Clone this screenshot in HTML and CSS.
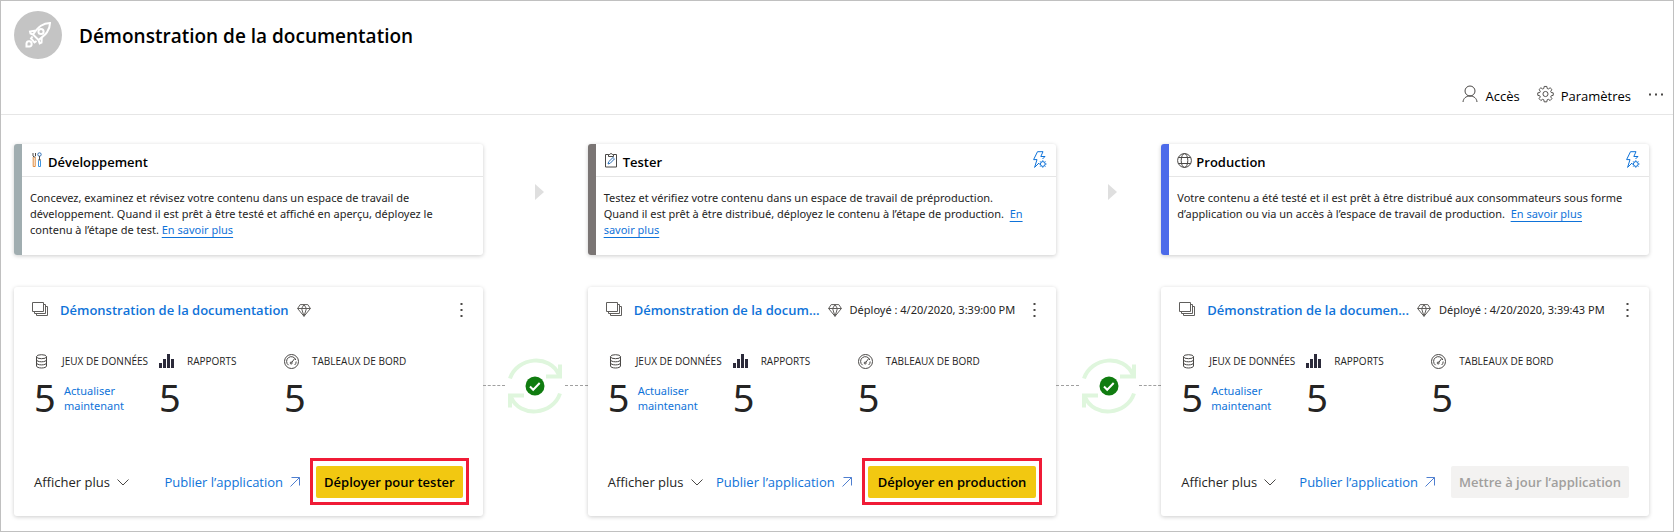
FILE: index.html
```html
<!DOCTYPE html>
<html lang="fr">
<head>
<meta charset="utf-8">
<title>Démonstration de la documentation</title>
<link rel="stylesheet" href="styles.css">
</head>
<body>
<svg class="sprite" aria-hidden="true">
  <symbol id="i-bolt" viewBox="0 0 16 18"><path d="M5.500.7H11L8.800 5.500H13L10.500 8M5.500.7 1.600 8.600H5L2.600 16.400 7 12" /><circle cx="10.800" cy="13" r="2.400"/><path d="M10.800 9.300v1.300M10.800 15.400v1.300M7.100 13h1.300M13.200 13h1.300M8.200 10.400l.9.9M12.500 14.700l.9.9M13.400 10.400l-.9.9M9.100 14.700l-.9.9"/></symbol>
  <symbol id="i-layers" viewBox="0 0 16 15"><path d="M.5.500h11v9H.500zM11.500 2.500h2v9h-11v-2M13.500 4.500h2v9h-11v-2"/></symbol>
  <symbol id="i-gem" viewBox="0 0 14 13"><path d="M3.200.6h7.600L13.400 4.500 7 12.300.6 4.500zM.6 4.500h12.800M4.600 4.500 7 12.300l2.400-7.800L7 .6z"/></symbol>
  <symbol id="i-dots" viewBox="0 0 3 16"><path d="M.5 1h2v2h-2zM.5 7h2v2h-2zM.5 13h2v2h-2z"/></symbol>
  <symbol id="i-data" viewBox="0 0 13 15"><ellipse cx="6.500" cy="2.700" rx="5" ry="2"/><path d="M1.500 2.700v9.300c0 1.100 2.200 2 5 2s5-.9 5-2V2.700M1.500 5.800c0 1.100 2.200 2 5 2s5-.9 5-2M1.500 8.900c0 1.100 2.200 2 5 2s5-.9 5-2"/></symbol>
  <symbol id="i-bars" viewBox="0 0 15 14"><path d="M0 9h3v5H0zM4 5h3v9H4zM8 0h3v14H8zM12 5h3v9h-3z"/></symbol>
  <symbol id="i-gauge" viewBox="0 0 15 15"><circle cx="7.500" cy="7.500" r="7"/><path d="M4.600 11.200A4.700 4.700 0 1 1 11.800 6M12.200 7.500a4.700 4.700 0 0 1-1.500 3.500M7.800 8.400 10.600 4.600"/><circle cx="7.200" cy="9" r="1"/></symbol>
  <symbol id="i-chevron" viewBox="0 0 12 7"><path d="M.5.5 6 6 11.500.5"/></symbol>
  <symbol id="i-out" viewBox="0 0 10 10"><path d="M1.500.500h8v8M9.500.500l-9 9"/></symbol>
  <symbol id="i-sync" viewBox="0 0 56 56"><path class="ring" d="M3 20.500C10-1 43-4.500 52 17M53 35.500C46 57 13 60.500 4 39"/><path class="ring" d="M53 6.500v12H39M3 49.500v-12h14"/><circle class="ok" cx="28" cy="28" r="9.500"/><path class="tick" d="m23 28.500 3.200 3.200 6.500-6.700"/></symbol>
</svg>

<div class="page">
  <header class="top">
    <div class="brand">
      <span class="avatar">
        <svg width="26" height="26" viewBox="0 0 26 26"><path d="M25 1C18 1 13.500 4.500 8 12.500l5.500 5.500C21 12.500 25 8 25 1zM8 12.500l-2.500-1L5 9.500 11 8.500M13.500 18l1.200 3.500 1.800-.8.300-5.200M7.500 14.500 6 16.500l3.500 4 2-1.500"/><circle cx="16" cy="9.500" r="2.600"/><path d="M1.500 24.500v-3a2.600 2.600 0 1 1 2.800 3z"/></svg>
      </span>
      <h1>Démonstration de la documentation</h1>
    </div>
    <div class="toolbar">
      <button type="button" class="tool"><svg width="16" height="18" viewBox="0 0 16 18"><circle cx="8" cy="6" r="5"/><path d="M1 17c.3-3.600 3-6 7-6s6.700 2.400 7 6"/></svg><span>Accès</span></button>
      <button type="button" class="tool"><svg width="17" height="18" viewBox="0 0 18 18"><circle cx="9" cy="9" r="2.700"/><path d="M7.600 1h2.800l.4 2.200 1.200.5 1.900-1.300 1.900 1.900-1.300 1.900.5 1.200 2.200.4v2.600l-2.200.5-.5 1.200 1.300 1.800-1.900 2-1.900-1.300-1.200.5-.4 2.200H7.600l-.4-2.200-1.200-.5-1.900 1.300-1.900-2 1.300-1.800-.5-1.200L.8 10.400V7.800L3 7.400l.5-1.200-1.300-1.900 1.900-1.900L6 3.700l1.200-.5z"/></svg><span>Paramètres</span></button>
      <button type="button" class="more" aria-label="Plus"><svg width="16" height="3" viewBox="0 0 16 3"><path d="M1 .5h2v2H1zM7 .5h2v2H7zM13 .5h2v2h-2z"/></svg></button>
    </div>
  </header>

  <main class="pipeline">
    <section class="stage dev">
      <div class="stage-head"><svg class="tools" width="10" height="16" viewBox="0 0 10 16"><path stroke="#e08a3c" d="M1.200 5v9.500h2V5"/><path d="M1 1v3l1.200 1.200L3.500 4V1"/><circle stroke="#2f6fb5" cx="7.500" cy="2.500" r="1.700"/><path d="M7.500 4v4M6 8h3"/><path stroke="#3e95e0" d="M6.500 8.500v6h2v-6"/></svg><h2>Développement</h2></div>
      <p>Concevez, examinez et révisez votre contenu dans un espace de travail de développement. Quand il est prêt à être testé et affiché en aperçu, déployez le contenu à l’étape de test. <a href="#">En savoir plus</a></p>
    </section>
    <div class="next"><svg width="9" height="16" viewBox="0 0 9 16"><path d="M0 0v16l9-8z"/></svg></div>
    <section class="stage test">
      <div class="stage-head"><svg class="clip" width="12" height="16" viewBox="0 0 12 16"><path d="M3.500 2.500h-3v12.500h11V2.500h-3M3.500 4.500v-2h1.300a1.300 1.300 0 0 1 2.500 0h1.200v2z"/><path stroke="#2f6fb5" d="m3 12 .7-2.300L8 5.500l1.500 1.400-4.200 4.300z"/></svg><h2>Tester</h2><button type="button" class="rules" aria-label="Règles"><svg width="16" height="18"><use href="#i-bolt"/></svg></button></div>
      <p>Testez et vérifiez votre contenu dans un espace de travail de préproduction. Quand il est prêt à être distribué, déployez le contenu à l’étape de production. &nbsp;<a href="#">En savoir plus</a></p>
    </section>
    <div class="next"><svg width="9" height="16" viewBox="0 0 9 16"><path d="M0 0v16l9-8z"/></svg></div>
    <section class="stage prod">
      <div class="stage-head"><svg width="15" height="15" viewBox="0 0 15 15"><circle cx="7.500" cy="7.500" r="6.900"/><ellipse cx="7.500" cy="7.500" rx="3.300" ry="6.900"/><path d="M1.300 4.500h12.400M1.300 10.500h12.400"/></svg><h2>Production</h2><button type="button" class="rules" aria-label="Règles"><svg width="16" height="18"><use href="#i-bolt"/></svg></button></div>
      <p>Votre contenu a été testé et il est prêt à être distribué aux consommateurs sous forme d’application ou via un accès à l’espace de travail de production. &nbsp;<a href="#">En savoir plus</a></p>
    </section>

    <article class="space">
      <div class="space-head">
        <svg class="layers" width="16" height="15"><use href="#i-layers"/></svg>
        <a class="name" href="#">Démonstration de la documentation</a>
        <svg class="gem" width="14" height="13"><use href="#i-gem"/></svg>
        <button type="button" class="menu" aria-label="Menu"><svg width="3" height="16"><use href="#i-dots"/></svg></button>
      </div>
      <div class="stats">
        <div class="stat"><svg width="15" height="15"><use href="#i-data"/></svg><span class="label">JEUX DE DONNÉES</span><strong>5</strong><a href="#">Actualiser maintenant</a></div>
        <div class="stat"><svg class="solid" width="15" height="14"><use href="#i-bars"/></svg><span class="label">RAPPORTS</span><strong>5</strong></div>
        <div class="stat"><svg width="15" height="15"><use href="#i-gauge"/></svg><span class="label">TABLEAUX DE BORD</span><strong>5</strong></div>
      </div>
      <div class="actions">
        <button type="button" class="show">Afficher plus<svg width="12" height="7"><use href="#i-chevron"/></svg></button>
        <a class="publish" href="#">Publier l’application<svg width="10" height="10"><use href="#i-out"/></svg></a>
        <button type="button" class="deploy marked">Déployer pour tester</button>
      </div>
    </article>
    <div class="sync"><svg width="56" height="56"><use href="#i-sync"/></svg></div>
    <article class="space">
      <div class="space-head">
        <svg class="layers" width="16" height="15"><use href="#i-layers"/></svg>
        <a class="name" href="#">Démonstration de la docum...</a>
        <svg class="gem" width="14" height="13"><use href="#i-gem"/></svg>
        <span class="date">Déployé : 4/20/2020, 3:39:00 PM</span>
        <button type="button" class="menu" aria-label="Menu"><svg width="3" height="16"><use href="#i-dots"/></svg></button>
      </div>
      <div class="stats">
        <div class="stat"><svg width="15" height="15"><use href="#i-data"/></svg><span class="label">JEUX DE DONNÉES</span><strong>5</strong><a href="#">Actualiser maintenant</a></div>
        <div class="stat"><svg class="solid" width="15" height="14"><use href="#i-bars"/></svg><span class="label">RAPPORTS</span><strong>5</strong></div>
        <div class="stat"><svg width="15" height="15"><use href="#i-gauge"/></svg><span class="label">TABLEAUX DE BORD</span><strong>5</strong></div>
      </div>
      <div class="actions">
        <button type="button" class="show">Afficher plus<svg width="12" height="7"><use href="#i-chevron"/></svg></button>
        <a class="publish" href="#">Publier l’application<svg width="10" height="10"><use href="#i-out"/></svg></a>
        <button type="button" class="deploy wide marked">Déployer en production</button>
      </div>
    </article>
    <div class="sync"><svg width="56" height="56"><use href="#i-sync"/></svg></div>
    <article class="space">
      <div class="space-head">
        <svg class="layers" width="16" height="15"><use href="#i-layers"/></svg>
        <a class="name" href="#">Démonstration de la documen...</a>
        <svg class="gem" width="14" height="13"><use href="#i-gem"/></svg>
        <span class="date">Déployé : 4/20/2020, 3:39:43 PM</span>
        <button type="button" class="menu" aria-label="Menu"><svg width="3" height="16"><use href="#i-dots"/></svg></button>
      </div>
      <div class="stats">
        <div class="stat"><svg width="15" height="15"><use href="#i-data"/></svg><span class="label">JEUX DE DONNÉES</span><strong>5</strong><a href="#">Actualiser maintenant</a></div>
        <div class="stat"><svg class="solid" width="15" height="14"><use href="#i-bars"/></svg><span class="label">RAPPORTS</span><strong>5</strong></div>
        <div class="stat"><svg width="15" height="15"><use href="#i-gauge"/></svg><span class="label">TABLEAUX DE BORD</span><strong>5</strong></div>
      </div>
      <div class="actions">
        <button type="button" class="show">Afficher plus<svg width="12" height="7"><use href="#i-chevron"/></svg></button>
        <a class="publish" href="#">Publier l’application<svg width="10" height="10"><use href="#i-out"/></svg></a>
        <button type="button" class="deploy" disabled>Mettre à jour l’application</button>
      </div>
    </article>
  </main>
</div>
</body>
</html>
```
FILE: styles.css
```css
* { box-sizing: border-box; }
body {
  margin: 0;
  background: #fff;
  color: #252423;
  font: 11px/16px "Noto Sans", "Open Sans", sans-serif;
}
h1, h2, p { margin: 0; }
a { color: #0f73d9; text-decoration: none; }
button { margin: 0; padding: 0; border: 0; background: none; color: inherit; font: inherit; }
svg { display: block; flex: none; fill: none; stroke: #4a4846; stroke-width: 1; }
.sprite { position: absolute; width: 0; height: 0; }

.page { min-height: 100vh; border: 1px solid #c0c0c0; padding-bottom: 15px; }

.top { border-bottom: 1px solid #e6e6e6; padding: 10px 9px 8px 13px; }
.brand { display: flex; align-items: center; gap: 17px; }
.avatar { display: grid; place-items: center; width: 48px; height: 48px; border-radius: 50%; background: #c4c4c4; }
.avatar svg { stroke: #fff; stroke-width: 2; }
h1, h2, .name, .toolbar, .actions, .label { font-family: "Open Sans", "Noto Sans", sans-serif; }
h1 { padding-top: 2px; color: #000; font-size: 19px; line-height: 24px; font-weight: 600; }
.toolbar { display: flex; justify-content: flex-end; align-items: center; gap: 17px; height: 24px; margin-top: 23px; color: #000; font-size: 13px; }
.tool { display: flex; align-items: center; gap: 7px; line-height: 20px; }
.tool span { padding-top: 4px; }
.more svg { fill: #4a4846; stroke: none; }

.pipeline {
  display: grid;
  grid-template-columns: minmax(0, 469fr) 105px minmax(0, 469fr) 105px minmax(0, 488fr);
  row-gap: 32px;
  padding: 29px 24px 0 13px;
}

.stage { min-height: 111px; border-left: 8px solid; border-radius: 3px; box-shadow: 0 1px 4px rgba(0, 0, 0, .2); }
.dev { border-color: #a0adb0; }
.test { border-color: #7a7574; }
.prod { border-color: #4c6bea; }
.stage-head { display: flex; align-items: center; gap: 4px; height: 33px; padding: 0 8px; border-bottom: 1px solid #e6e6e6; }
.tools { margin: 0 2px; }
.clip { margin: 0 2px 0 1px; }
.stage h2 { padding-top: 3px; color: #000; font-size: 13px; line-height: 18px; font-weight: 600; }
.rules { margin-left: auto; }
.rules svg { stroke: #0f73d9; }
.stage p { padding: 13px 16px 8px 8px; }
.test p { padding-right: 30px; }
.stage p a { text-decoration: underline; text-underline-offset: 3px; }
.next { display: grid; place-items: center; padding: 0 0 16px 8px; }
.next svg { fill: #dfdfdf; stroke: none; }

.space { display: flex; flex-direction: column; min-height: 229px; padding: 13px 20px 18px 18px; border-radius: 3px; box-shadow: 0 1px 4px rgba(0, 0, 0, .2); }
.space-head { display: flex; align-items: center; height: 20px; }
.space-head svg { stroke: #605e5c; }
.layers { margin-bottom: 2px; }
.name { margin-left: 12px; font-size: 13px; line-height: 20px; font-weight: 600; white-space: nowrap; }
.gem { margin-left: 8px; }
.date { margin-left: 8px; white-space: nowrap; }
.menu { margin-left: auto; }
.space-head .menu svg { fill: #4a4846; stroke: none; }

.stats { display: grid; grid-template-columns: 125px 125px 1fr; margin-top: 32px; padding-left: 2px; }
.stat { display: grid; grid-template-columns: 28px 1fr; grid-template-rows: 18px 42px; row-gap: 6px; align-items: center; }
.label { font-size: 10px; white-space: nowrap; }
.stat svg.solid { fill: #2b2a3a; stroke: none; }
.stat strong { font-size: 38px; line-height: 42px; font-weight: 400; }
.stat a { width: 80px; padding: 2px 0 0 2px; line-height: 15px; }

.actions { display: flex; align-items: center; margin-top: auto; padding-left: 2px; font-size: 13px; }
.show, .publish { display: flex; align-items: center; gap: 7px; white-space: nowrap; }
.publish { margin-left: auto; }
.publish svg { stroke: #4f7fd0; }
.deploy { position: relative; height: 32px; margin-left: 16px; padding: 0 8px; border-radius: 2px; background: #f2c811; color: #000; font-weight: 600; white-space: nowrap; }
.wide { padding: 0 10px; }
.deploy:disabled { background: #f3f2f1; color: #a19f9d; }
.marked::after { content: ""; position: absolute; inset: -8px -6px -7px; border: 3px solid #f01b36; }

.sync { display: flex; align-items: center; gap: 2px; padding-bottom: 32px; }
.sync::before, .sync::after { content: ""; flex: 1; border-top: 1px dashed #a0a0a0; }
.ring { stroke: #dff6dd; stroke-width: 4; }
.ok { fill: #107c10; stroke: none; }
.tick { stroke: #fff; stroke-width: 2; }
```
